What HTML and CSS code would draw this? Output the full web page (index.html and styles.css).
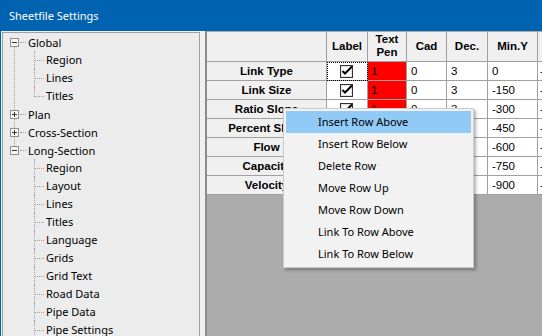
FILE: index.html
```html
<!DOCTYPE html>
<html lang="en">
<head>
    <meta charset="UTF-8" />
    <title>Sheetfile Settings</title>
    <link rel="stylesheet" href="styles.css">
</head>
<body>
<div class="titlebar">Sheetfile Settings</div>

<div class="window-body">
    <!-- Settings tree -->
    <div class="tree-box">
        <ul class="tree">
            <li class="node">
                <div class="row"><span class="toggle minus"></span><span class="dash"></span><span class="label">Global</span></div>
                <ul class="branch">
                    <li>Region</li>
                    <li>Lines</li>
                    <li>Titles</li>
                </ul>
            </li>
            <li class="node">
                <div class="row"><span class="toggle plus"></span><span class="dash"></span><span class="label">Plan</span></div>
            </li>
            <li class="node">
                <div class="row"><span class="toggle plus"></span><span class="dash"></span><span class="label">Cross-Section</span></div>
            </li>
            <li class="node">
                <div class="row"><span class="toggle minus"></span><span class="dash"></span><span class="label">Long-Section</span></div>
                <ul class="branch">
                    <li>Region</li>
                    <li>Layout</li>
                    <li>Lines</li>
                    <li>Titles</li>
                    <li>Language</li>
                    <li>Grids</li>
                    <li>Grid Text</li>
                    <li>Road Data</li>
                    <li>Pipe Data</li>
                    <li>Pipe Settings</li>
                    <li>Pipe Labels</li>
                </ul>
            </li>
        </ul>
    </div>

    <!-- Settings grid -->
    <div class="grid-wrap">
        <div class="grid" id="grid">
            <div class="cell head"></div>
            <div class="cell head">Label</div>
            <div class="cell head two-line">Text<br>Pen</div>
            <div class="cell head">Cad</div>
            <div class="cell head">Dec.</div>
            <div class="cell head">Min.Y</div>
            <div class="cell head">Max.Y</div>
        </div>
    </div>
</div>

<!-- Right click menu -->
<ul class="context-menu">
    <li class="active">Insert Row Above</li>
    <li>Insert Row Below</li>
    <li>Delete Row</li>
    <li>Move Row Up</li>
    <li>Move Row Down</li>
    <li>Link To Row Above</li>
    <li>Link To Row Below</li>
</ul>

<script>
    const grid = document.getElementById('grid');

    const filas = [
        { nombre: 'Link Type', pen: 1, cad: 0, dec: 3, minY: 0 },
        { nombre: 'Link Size', pen: 1, cad: 0, dec: 3, minY: -150 },
        { nombre: 'Ratio Slope', pen: 1, cad: 0, dec: 3, minY: -300 },
        { nombre: 'Percent Slope', pen: 1, cad: 0, dec: 3, minY: -450 },
        { nombre: 'Flow', pen: 1, cad: 0, dec: 3, minY: -600 },
        { nombre: 'Capacity', pen: 1, cad: 0, dec: 3, minY: -750 },
        { nombre: 'Velocity', pen: 1, cad: 0, dec: 3, minY: -900 }
    ];

    const checkSvg =
        '<svg width="14" height="14" viewBox="0 0 14 14">' +
        '<rect x="0.5" y="1.5" width="12" height="12" fill="#fff" stroke="#333"/>' +
        '<rect x="1.5" y="2.5" width="10" height="10" fill="none" stroke="#e3e3e3"/>' +
        '<path d="M2.5 7 L5 9.5 L12 2.5" fill="none" stroke="#000" stroke-width="2"/>' +
        '</svg>';

    function celda(clase, texto) {
        const div = document.createElement('div');
        div.className = 'cell ' + clase;
        if (texto !== undefined) div.textContent = texto;
        grid.appendChild(div);
        return div;
    }

    filas.forEach((fila, i) => {
        celda('row-head', fila.nombre);
        const label = celda('check');
        label.innerHTML = checkSvg;
        if (i === 0) label.classList.add('focused');
        celda('pen', fila.pen);
        celda('data', fila.cad);
        celda('data', fila.dec);
        celda('data', fila.minY);
        celda('data max-y', fila.minY - 150);
    });
</script>
</body>
</html>
```

FILE: styles.css
```css
* {
    box-sizing: border-box;
    margin: 0;
    padding: 0;
}

body {
    width: 542px;
    height: 336px;
    overflow: hidden;
    background: #f0f0f0;
    font-family: "Segoe UI", "Noto Sans", sans-serif;
    font-size: 11px;
    color: #000;
}

/* Title bar */
.titlebar {
    height: 31px;
    background: #0063b1;
    color: #fff;
    font-size: 11px;
    line-height: 31px;
    padding-left: 9px;
}

.window-body {
    display: flex;
    height: 305px;
    border-left: 1px solid #0063b1;
}

/* Tree */
.tree-box {
    width: 198px;
    margin: 1px 0 0 1px;
    border: 1px solid #a0a0a0;
    border-bottom: none;
    background: #ececec;
    overflow: hidden;
}

.tree,
.branch {
    list-style: none;
}

.tree .node {
    position: relative;
    padding-left: 7px;
}

/* vertical line between root nodes */
.tree .node:not(:last-child)::after {
    content: "";
    position: absolute;
    left: 11px;
    top: 9px;
    bottom: -9px;
    border-left: 1px dotted #a0a0a0;
}

.row {
    display: flex;
    align-items: center;
    height: 18px;
}

.toggle {
    position: relative;
    z-index: 1;
    width: 9px;
    height: 9px;
    border: 1px solid #919191;
    background: #f7f7f7;
}

.toggle::before,
.toggle.plus::after {
    content: "";
    position: absolute;
    left: 1px;
    top: 3px;
    width: 5px;
    height: 1px;
    background: #333;
}

.toggle.plus::after {
    left: 3px;
    top: 1px;
    width: 1px;
    height: 5px;
}

.dash {
    width: 6px;
    margin: 0 2px 0 1px;
    border-top: 1px dotted #a0a0a0;
}

.branch {
    margin-left: 24px;
}

.branch li {
    position: relative;
    height: 18px;
    line-height: 18px;
    padding-left: 12px;
}

.branch li::before {
    content: "";
    position: absolute;
    left: 0;
    top: 9px;
    width: 10px;
    border-top: 1px dotted #a0a0a0;
}

.branch li::after {
    content: "";
    position: absolute;
    left: 0;
    top: 0;
    height: 18px;
    border-left: 1px dotted #a0a0a0;
}

.branch li:last-child::after {
    height: 10px;
}

/* Grid */
.grid-wrap {
    flex: 1;
    margin-left: 5px;
    border-left: 2px solid #8c8c8c;
    background: #ababab;
    overflow: hidden;
}

.grid {
    display: grid;
    grid-template-columns: 120px 41px 39px 40px 41px 50px 60px;
    grid-template-rows: 30px;
    grid-auto-rows: 19px;
    width: max-content;
    margin-top: 1px;
    font-family: "Liberation Sans", Arial, sans-serif;
    font-size: 11.5px;
}

.cell {
    border-right: 1px solid #a0a0a0;
    border-bottom: 1px solid #a0a0a0;
    background: #fff;
    line-height: 18px;
    white-space: nowrap;
    overflow: hidden;
}

.head {
    background: #f0f0f0;
    font-weight: bold;
    text-align: center;
    line-height: 29px;
}

.head.two-line {
    line-height: 13px;
    padding-top: 1px;
}

.row-head {
    background: #f0f0f0;
    font-weight: bold;
    text-align: center;
}

.check {
    display: flex;
    align-items: center;
    justify-content: center;
}

.check svg {
    display: block;
}

.focused {
    outline: 1px dotted #000;
    outline-offset: -1px;
}

.pen {
    background: #ff0000;
    padding-left: 3px;
}

.data {
    padding-left: 4px;
}

.data.max-y {
    padding-left: 2px;
}

/* Context menu */
.context-menu {
    position: absolute;
    left: 283px;
    top: 108px;
    width: 191px;
    padding: 2px;
    list-style: none;
    background: #f2f2f2;
    border: 1px solid #cccccc;
    box-shadow: 2px 2px 3px rgba(0,0,0,0.3);
}

.context-menu li {
    height: 22px;
    line-height: 22px;
    padding-left: 32px;
}

.context-menu li.active {
    background: #91c9f7;
}
```
